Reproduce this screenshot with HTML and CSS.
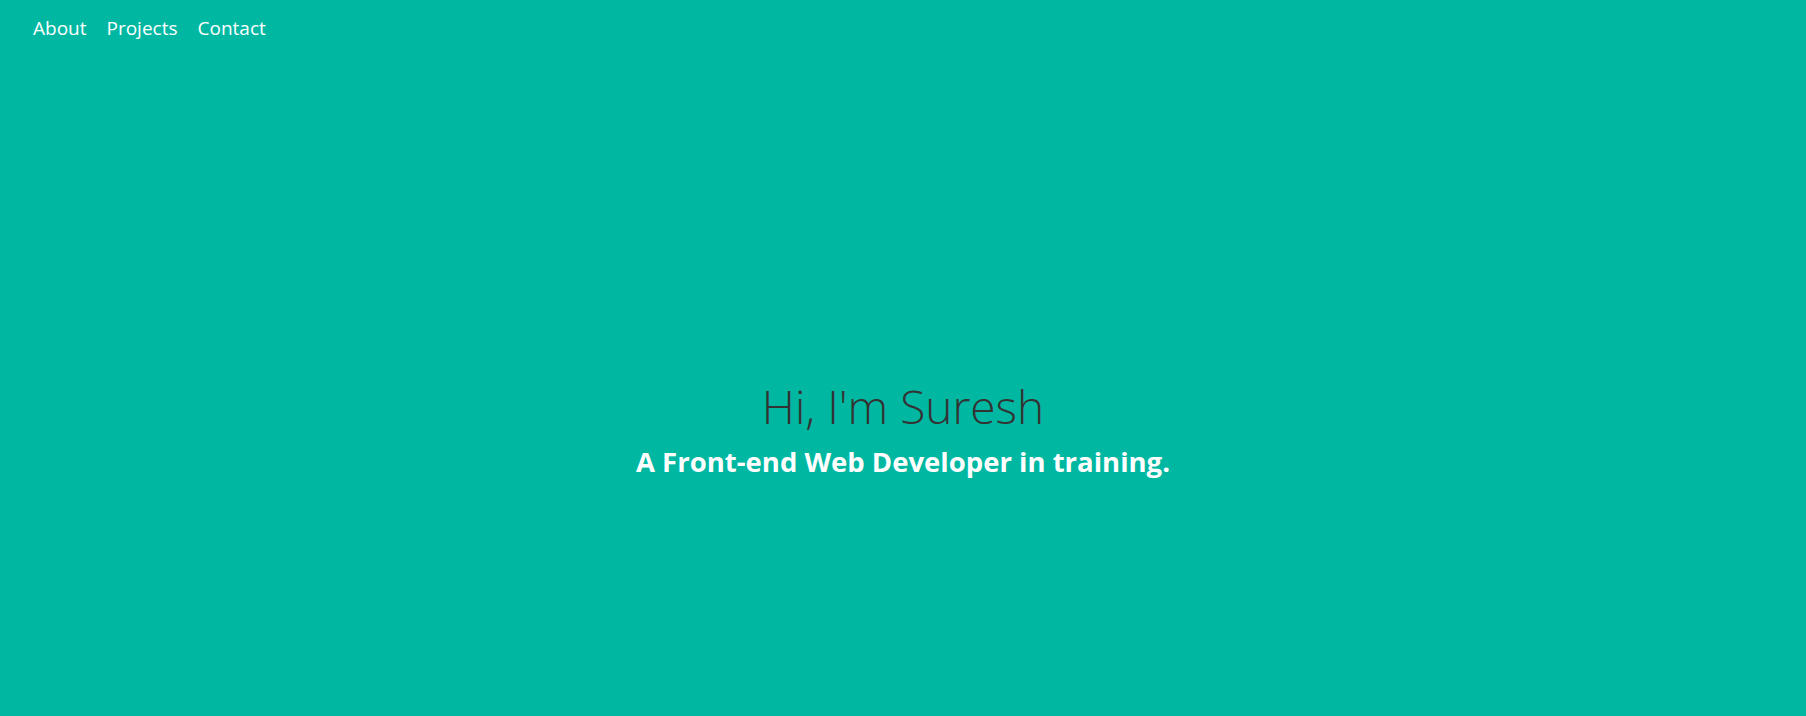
FILE: index.html
```html
<!DOCTYPE html>
<html lang="en">
<head>
<meta charset="utf-8">
<title>Suresh</title>
<link rel="stylesheet" href="styles.css">
</head>
<body>
<header class="site-header">
  <nav class="nav">
    <a class="nav-link" href="#about">About</a>
    <a class="nav-link" href="#projects">Projects</a>
    <a class="nav-link" href="#contact">Contact</a>
  </nav>
</header>
<main class="hero">
  <h1 class="hero-title">Hi, I'm Suresh</h1>
  <p class="hero-subtitle">A Front-end Web Developer in training.</p>
</main>
</body>
</html>
```

FILE: styles.css
```css
html, body {
  margin: 0;
  padding: 0;
}
body {
  background: #00b8a2;
  font-family: "Open Sans", "Noto Sans", sans-serif;
  min-height: 716px;
}
.site-header {
  padding: 12px 33px 0;
}
.nav {
  display: flex;
  gap: 20px;
}
.nav-link {
  color: #ffffff;
  text-decoration: none;
  font-size: 19px;
  line-height: 32px;
}
.hero {
  display: flex;
  flex-direction: column;
  align-items: center;
  padding-top: 332px;
}
.hero-title {
  margin: 0;
  font-weight: 300;
  font-size: 46px;
  line-height: 60px;
  color: #333333;
}
.hero-subtitle {
  margin: 6px 0 0;
  font-weight: 700;
  font-size: 27.5px;
  line-height: 40px;
  color: #ffffff;
}
```
